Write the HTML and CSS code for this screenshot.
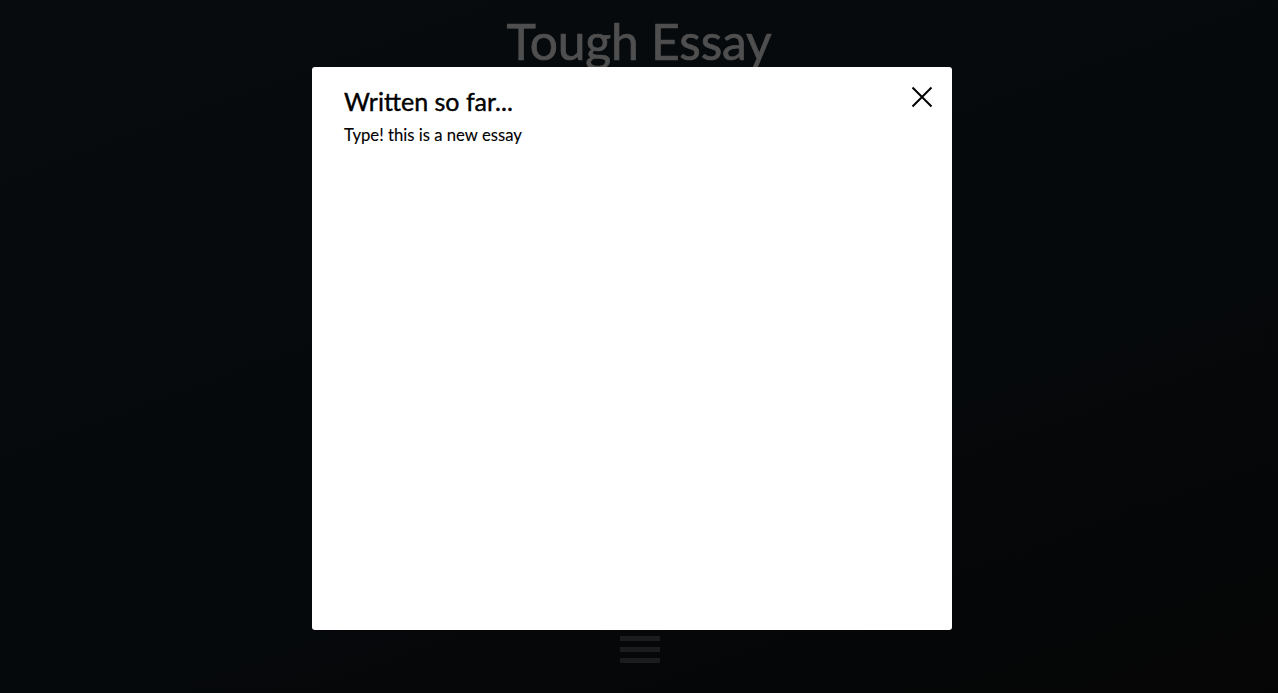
FILE: index.html
```html
<!DOCTYPE html>
<html>
<head>
<meta charset="utf-8">
<link rel="stylesheet" href="styles.css">
</head>
<body>
<div class="page">
  <h1 class="title">Tough Essay</h1>
  <div class="spacer"></div>
  <div class="menu">
    <span class="bar"></span>
    <span class="bar"></span>
    <span class="bar"></span>
  </div>
</div>
<div class="modal">
  <h2 class="modal-title">Written so far...</h2>
  <p class="modal-text">Type! this is a new essay</p>
  <button class="close" aria-label="Close">
    <svg width="22" height="22" viewBox="0 0 22 22"><path d="M1.5 1.5L20.5 20.5M20.5 1.5L1.5 20.5" stroke="#000" stroke-width="2" fill="none"/></svg>
  </button>
</div>
</body>
</html>
```
FILE: styles.css
```css
html, body {
  margin: 0;
  padding: 0;
  height: 100%;
}
body {
  background: linear-gradient(160deg, #070b0e 0%, #06090c 55%, #050505 100%);
  font-family: Lato, "Open Sans", sans-serif;
  overflow: hidden;
}
.page {
  height: 693px;
  display: flex;
  flex-direction: column;
  align-items: center;
}
.title {
  margin: 10px 0 0;
  font-size: 49.8px;
  font-weight: 400;
  color: #4f4f4f;
  line-height: 62px;
  -webkit-text-stroke: 0.7px #4f4f4f;
  letter-spacing: -0.2px;
}
.spacer {
  flex: 1;
}
.menu {
  display: flex;
  flex-direction: column;
  gap: 6px;
  margin: 0 0 30px 2px;
}
.bar {
  display: block;
  width: 40px;
  height: 5px;
  background: #1b1c1e;
}
.modal {
  position: absolute;
  left: 312px;
  top: 67px;
  width: 640px;
  height: 563px;
  box-sizing: border-box;
  padding: 18px 32px;
  background: #fff;
  border-radius: 3px;
}
.modal-title {
  margin: 0;
  font-size: 25px;
  font-weight: 400;
  color: #000;
  line-height: 32px;
  -webkit-text-stroke: 0.4px #000;
}
.modal-text {
  margin: 7px 0 0;
  font-size: 16.7px;
  color: #000;
  line-height: 22px;
  -webkit-text-stroke: 0.1px #000;
}
.close {
  position: absolute;
  top: 19px;
  right: 19px;
  padding: 0;
  border: 0;
  background: none;
  width: 22px;
  height: 22px;
}
.close svg { display: block; }
```
